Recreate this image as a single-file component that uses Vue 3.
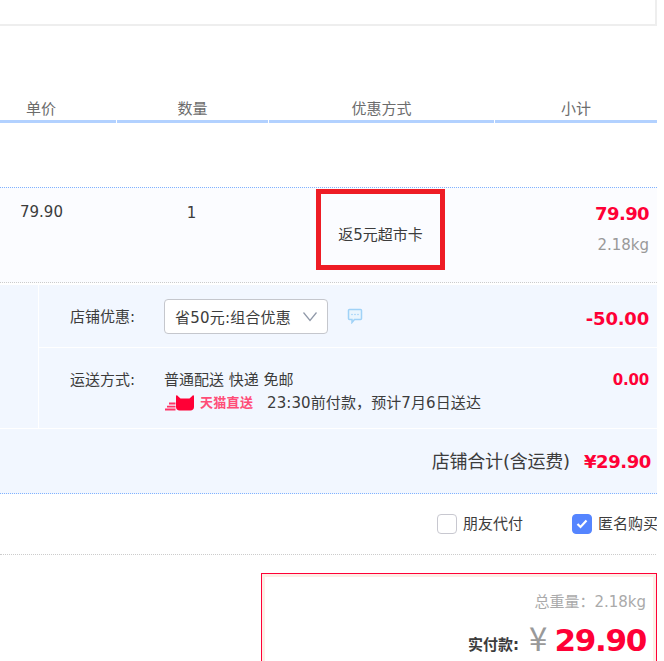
<script setup>
const headers = ['单价', '数量', '优惠方式', '小计']
</script>

<template>
  <div class="page">
    <div class="top-box"></div>

    <div class="head">
      <div v-for="h in headers" :key="h" class="head-cell">{{ h }}</div>
    </div>

    <div class="item">
      <div class="item-price">79.90</div>
      <div class="item-qty">1</div>
      <div class="item-promo">
        <div class="promo-box">返5元超市卡</div>
      </div>
      <div class="item-sum">
        <div class="sum-price">79.90</div>
        <div class="sum-weight">2.18kg</div>
      </div>
    </div>

    <div class="panel">
      <div class="opts">
        <div class="opt-side"></div>
        <div class="opt-main">
          <div class="opt opt-shop">
            <div class="opt-label">店铺优惠:</div>
            <div class="select">
              <span class="select-text">省50元:组合优惠</span>
              <svg class="chevron" width="14" height="10" viewBox="0 0 14 10">
                <path d="M0.5 0.5 L7 8.5 L13.500 0.5" fill="none" stroke="#8f98a8" stroke-width="1.200" />
              </svg>
            </div>
            <svg class="chat" width="16" height="16" viewBox="0 0 16 16">
              <path d="M2.500 1.500h11A1 1 0 0 1 14.500 2.500v8a1 1 0 0 1-1 1H7.500L5 14.500v-3H2.500a1 1 0 0 1-1-1v-8a1 1 0 0 1 1-1z" fill="#eaf5fd" stroke="#a0d2f7" stroke-width="1.500" />
              <circle cx="5" cy="6.500" r=".8" fill="#a0d2f7" />
              <circle cx="8" cy="6.500" r=".8" fill="#a0d2f7" />
              <circle cx="11" cy="6.500" r=".8" fill="#a0d2f7" />
            </svg>
            <div class="opt-amount amount-big">-50.00</div>
          </div>
          <div class="opt opt-ship">
            <div class="opt-label">运送方式:</div>
            <div class="ship-info">
              <div>普通配送 快递 免邮</div>
              <div class="ship-line">
                <div class="tmall">
                  <svg width="32" height="16" viewBox="0 0 32 16">
                    <path d="M4 7.500h6.500v2H4zM2 10.800h8.500v1.700H2zM0 13.500h10.500v2H0z" fill="#ff3366" />
                    <path d="M11 1.500c0-1 .8-1.500 1.500-.8L15.500 3.500h9l3-2.800c.7-.7 1.500-.2 1.500.8V12c0 2-1.500 3.500-3.500 3.500h-11C12.500 15.500 11 14 11 12z" fill="#ff0036" />
                  </svg>
                  <span>天猫直送</span>
                </div>
                <span class="eta">23:30前付款，预计7月6日送达</span>
              </div>
            </div>
            <div class="opt-amount amount-small">0.00</div>
          </div>
        </div>
      </div>
      <div class="total">
        <span class="total-label">店铺合计(含运费)</span>
        <span class="total-value">¥29.90</span>
      </div>
    </div>

    <div class="checks">
      <label class="check">
        <span class="box"></span>
        <span>朋友代付</span>
      </label>
      <label class="check">
        <span class="box box-on">
          <svg width="12" height="10" viewBox="0 0 12 10">
            <path d="M1.500 5 L4.500 8 L10.500 1.500" fill="none" stroke="#fff" stroke-width="2.200" />
          </svg>
        </span>
        <span>匿名购买</span>
      </label>
    </div>

    <div class="summary-wrap">
      <div class="summary">
        <div class="summary-inner">
          <div class="weight">总重量：2.18kg</div>
          <div class="pay">
            <span class="pay-label">实付款:</span>
            <span class="pay-yen">¥</span>
            <span class="pay-value">29.90</span>
          </div>
        </div>
      </div>
    </div>
  </div>
</template>

<style>
html, body { margin: 0; background: #fff; overflow: hidden; }
</style>

<style scoped>
.page {
  width: 657px;
  height: 661px;
  overflow: hidden;
  font: 15px/20px "DejaVu Sans", "Noto Sans CJK SC", sans-serif;
  color: #3c3c3c;
}
.top-box {
  height: 24px;
  border-right: 2px solid #eee;
  border-bottom: 2px solid #eee;
}
.head {
  display: grid;
  grid-template-columns: 116px 151px 225px 162px;
  column-gap: 1px;
  margin-top: 72px;
}
.head-cell {
  height: 22px;
  line-height: 22px;
  text-align: center;
  color: #6c6c6c;
  border-bottom: 3px solid #b2d1ff;
}
.head-cell:first-child { text-align: left; padding-left: 26px; }
.item {
  display: grid;
  grid-template-columns: 116px 151px 225px 162px;
  column-gap: 1px;
  height: 94px;
  margin-top: 64px;
  border-top: 1px dotted #80b2ff;
  border-bottom: 1px dotted #ccc;
  background: #fbfcff;
}
.item-price { padding: 14px 0 0 20px; }
.item-qty { padding: 15px 2px 0 0; text-align: center; }
.item-promo { padding-top: 1px; }
.promo-box {
  box-sizing: border-box;
  width: 129px;
  height: 81px;
  margin-left: 47px;
  padding-top: 31px;
  border: 5px solid #ee1c25;
  text-align: center;
  white-space: nowrap;
}
.item-sum { padding: 16px 8px 0 0; text-align: right; }
.sum-price { font-size: 18px; letter-spacing: -0.6px; font-weight: 700; color: #ff0036; }
.sum-weight { margin-top: 11px; color: #999; }
.panel {
  margin-top: 2px;
  border-bottom: 1px dotted #80b2ff;
  background: #f2f7ff;
}
.opts {
  display: flex;
  height: 143px;
  border-bottom: 1px solid #fff;
}
.opt-side { width: 38px; border-right: 1px solid #fff; }
.opt-main { flex: 1; min-width: 0; }
.opt {
  display: flex;
  padding-left: 31px;
}
.opt-shop {
  align-items: center;
  height: 62px;
  border-bottom: 1px solid #fff;
}
.opt-ship { padding-top: 22px; }
.opt-label { width: 94px; flex: none; }
.opt-shop .opt-label { padding-top: 2px; }
.select {
  box-sizing: border-box;
  display: flex;
  align-items: center;
  justify-content: space-between;
  width: 164px;
  height: 35px;
  padding: 0 10px;
  border: 1px solid #c5c7cd;
  border-radius: 4px;
  background: #fff;
  white-space: nowrap;
}
.select-text { padding-top: 3px; letter-spacing: 0.2px; }
.chevron { margin-top: 2px; }
.chat { margin-left: 19px; }
.opt-amount {
  margin-left: auto;
  margin-right: 8px;
  font-weight: 700;
  color: #ff0036;
}
.amount-big { padding-top: 5px; font-size: 18px; letter-spacing: -0.2px; }
.amount-small { font-size: 15px; letter-spacing: -0.2px; }
.ship-info { line-height: 20px; white-space: nowrap; }
.ship-line { display: flex; align-items: center; margin-top: 3px; }
.tmall {
  display: flex;
  align-items: center;
  gap: 3px;
  width: 89px;
  margin-left: 1px;
  font-size: 13px;
  font-weight: 700;
  letter-spacing: 0.3px;
  color: #ff4d78;
}
.eta { margin-left: 13px; letter-spacing: 0.1px; }
.total {
  box-sizing: border-box;
  display: flex;
  justify-content: flex-end;
  align-items: center;
  gap: 14px;
  height: 64px;
  padding: 2px 6px 0 0;
}
.total-label { font-size: 18px; letter-spacing: -0.2px; }
.total-value { font-size: 18px; letter-spacing: -0.4px; font-weight: 700; color: #ff0036; }
.checks {
  display: flex;
  justify-content: flex-end;
  gap: 50px;
  align-items: center;
  height: 60px;
  margin-right: -1px;
  border-bottom: 1px dotted #ccc;
  white-space: nowrap;
}
.check { display: flex; align-items: center; gap: 6px; }
.check:first-child { margin-right: -1px; }
.box {
  box-sizing: border-box;
  display: flex;
  align-items: center;
  justify-content: center;
  width: 20px;
  height: 20px;
  border: 1px solid #c8c8d0;
  border-radius: 4px;
  background: #fff;
}
.box-on { border-color: #5585ff; background: #5585ff; }
.summary-wrap { padding: 18px 0 0 261px; }
.summary {
  border: 1px solid #ff0036;
}
.summary-inner {
  height: 120px;
  padding: 15px 7px 0 0;
  border: 3px solid #fdeee6;
  text-align: right;
  white-space: nowrap;
}
.weight { color: #aaa; }
.pay { margin-top: 7px; display: flex; justify-content: flex-end; align-items: baseline; }
.pay-label { font-weight: 700; color: #3c3c3c; transform: translateY(-1px); }
.pay-yen { margin: 0 7px 0 10px; font-size: 33px; line-height: 36px; color: #999; font-family: "Noto Sans CJK SC", sans-serif; }
.pay-value { font-size: 31px; letter-spacing: -1.3px; line-height: 36px; font-weight: 700; color: #ff0036; }
</style>
